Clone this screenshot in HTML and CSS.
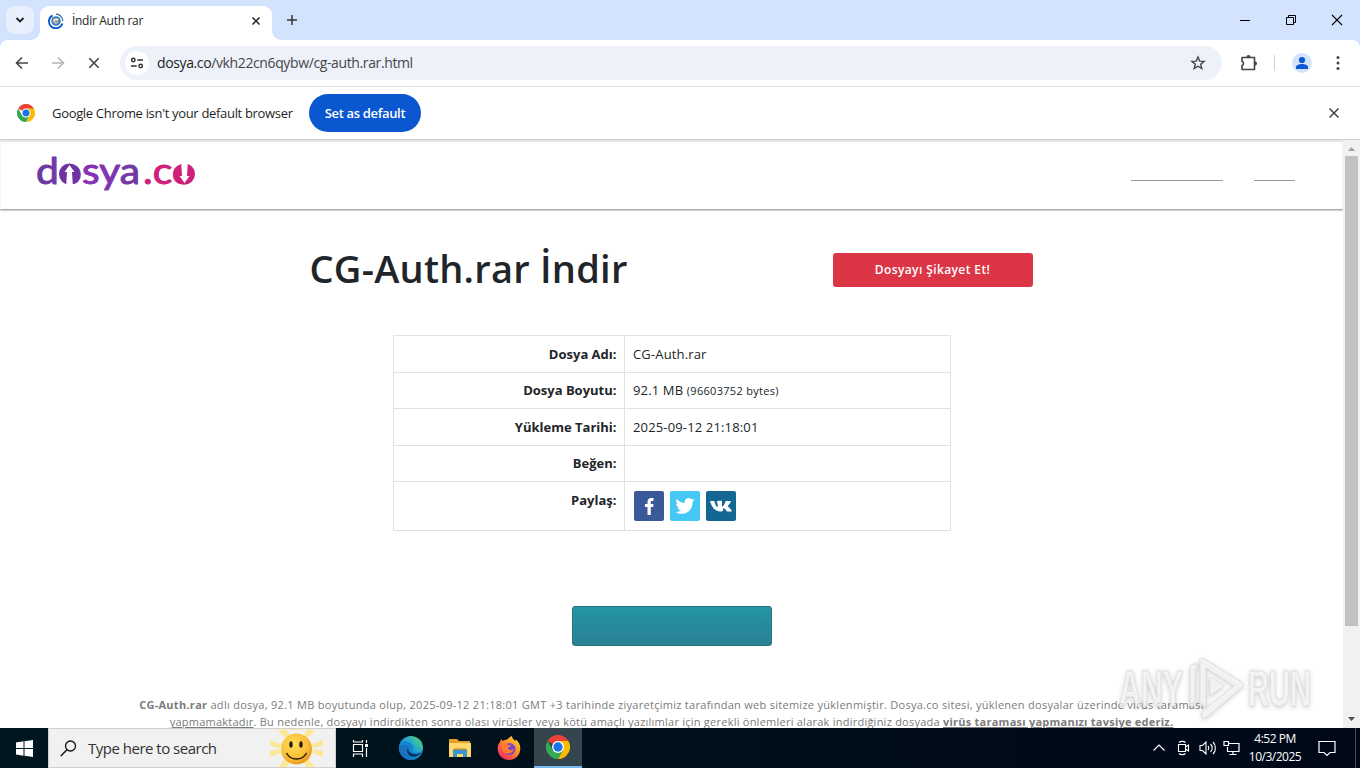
FILE: index.html
```html
<!DOCTYPE html>
<html lang="tr">
<head>
    <meta charset="UTF-8">
    <meta name="viewport" content="width=device-width, initial-scale=1.0">
    <link rel="stylesheet" href="styles.css">
    <title>İndir Auth rar</title>
</head>
<body>
    <svg class="defs" width="0" height="0">
        <defs>
            <linearGradient id="purple" x1="0" y1="0" x2="1" y2="0">
                <stop offset="0" stop-color="#673a9e"/><stop offset=".5" stop-color="#8a2fb8"/><stop offset="1" stop-color="#6d3a9f"/>
            </linearGradient>
            <linearGradient id="edge" x1="0" y1="1" x2="1" y2="0">
                <stop offset="0" stop-color="#0c59a4"/><stop offset=".5" stop-color="#1b9de2"/><stop offset="1" stop-color="#5fdc63"/>
            </linearGradient>
            <linearGradient id="fire" x1="1" y1="0" x2=".2" y2="1">
                <stop offset="0" stop-color="#ffe23e"/><stop offset=".45" stop-color="#ff9420"/><stop offset="1" stop-color="#f02465"/>
            </linearGradient>
            <radialGradient id="sun" cx=".4" cy=".35" r=".7">
                <stop offset="0" stop-color="#ffdf58"/><stop offset=".65" stop-color="#fbbd35"/><stop offset="1" stop-color="#e5901c"/>
            </radialGradient>
            <symbol id="chrome" viewBox="0 0 48 48">
                <path fill="#ea4335" d="M24 24 3.2 12A24 24 0 0 1 44.8 12z"/>
                <path fill="#34a853" d="M3.2 12 13.6 30 24 36 34.4 30 24 48A24 24 0 0 1 3.2 12z"/>
                <path fill="#fbbc04" d="M24 12h20.8A24 24 0 0 1 24 48L34.4 30z"/>
                <circle cx="24" cy="24" r="12" fill="#fff"/><circle cx="24" cy="24" r="9.3" fill="#1a73e8"/>
            </symbol>
        </defs>
    </svg>

    <div class="tabstrip">
        <div class="tab-search"><svg width="10" height="8" viewBox="0 0 10 8"><path d="M1.5 2 5 5.5 8.5 2" fill="none" stroke="#1f1f1f" stroke-width="1.8"/></svg></div>
        <div class="tab">
            <svg width="16" height="16" viewBox="0 0 16 16">
                <path d="M4.500 2.300A6.900 6.900 0 1 0 14.400 10.500" fill="none" stroke="#0b57d0" stroke-width="1.900"/>
                <path d="M8 1.200A6.800 6.800 0 0 1 14.800 8" fill="none" stroke="#25699f" stroke-width="1.200"/>
                <circle cx="8" cy="8" r="4.800" fill="#4781af"/>
                <path d="M5.500 6 9 5.200l2 1.500-1.800 1.200 1 2-2.600.8-2.500-2.300z" fill="#eee5df"/>
                <path d="m6.400 7.500 2.800.6-1 1.800z" fill="#8f4c38"/>
            </svg>
            <span class="tab-title">İndir Auth rar</span>
            <svg class="tab-close" width="10" height="10" viewBox="0 0 10 10"><path d="m1.5 1.5 7 7m0-7-7 7" stroke="#1f1f1f" stroke-width="1.5"/></svg>
        </div>
        <svg class="new-tab" width="12" height="12" viewBox="0 0 12 12"><path d="M6 1v10M1 6h10" stroke="#333" stroke-width="1.5"/></svg>
        <div class="window-buttons">
            <svg width="12" height="12" viewBox="0 0 12 12"><path d="M1 6.5h10" stroke="#000"/></svg>
            <svg width="12" height="12" viewBox="0 0 12 12"><path d="M1.5 3.5h7v7h-7zM3.500 3.500v-2h7v7h-2" fill="none" stroke="#000"/></svg>
            <svg width="12" height="12" viewBox="0 0 12 12"><path d="m1 1 10 10M11 1 1 11" stroke="#000" stroke-width="1.1"/></svg>
        </div>
    </div>

    <div class="toolbar">
        <svg class="nav-icon" width="14" height="14" viewBox="0 0 14 14"><path d="M13 7H2m5-5.500L1.500 7 7 12.500" fill="none" stroke="#444" stroke-width="1.6"/></svg>
        <svg class="nav-icon" width="14" height="14" viewBox="0 0 14 14"><path d="M1 7h11M7 1.500 12.500 7 7 12.500" fill="none" stroke="#b5b5b5" stroke-width="1.6"/></svg>
        <svg class="nav-icon" width="14" height="14" viewBox="0 0 14 14"><path d="m2.300 2.300 9.400 9.400m0-9.400-9.400 9.400" stroke="#444" stroke-width="1.6"/></svg>
        <div class="omnibox">
            <div class="site-info">
                <svg width="14" height="12" viewBox="0 0 14 12" fill="none" stroke="#333" stroke-width="1.5"><circle cx="3.300" cy="3" r="1.700"/><path d="M7.300 3H13M1 9h5.700"/><circle cx="10.700" cy="9" r="1.700"/></svg>
            </div>
            <span class="url"><b>dosya.co</b>/vkh22cn6qybw/cg-auth.rar.html</span>
            <svg class="star" width="16" height="16" viewBox="0 0 16 16"><path d="m8 2 1.700 4.100 4.400.3-3.400 2.800 1.100 4.300L8 11.200l-3.800 2.300 1.100-4.300L1.900 6.400l4.400-.3z" fill="none" stroke="#444" stroke-width="1.4"/></svg>
        </div>
        <svg class="puzzle" width="18" height="18" viewBox="0 0 18 18"><path d="M2 3.500h12.500v12H2v-4a2.200 2.200 0 0 0 0-4.200z" fill="none" stroke="#444" stroke-width="1.600" stroke-linejoin="round"/><path d="M6.500 3a2 2 0 0 1 4 0zM15 7.500a2 2 0 0 1 0 4z" fill="#444"/></svg>
        <span class="divider"></span>
        <svg class="profile" width="20" height="20" viewBox="0 0 20 20"><circle cx="10" cy="10" r="10" fill="#d3e3fd"/><circle cx="10" cy="7" r="3.100" fill="#0b57d0"/><path d="M4 16v-2c0-2 3.300-3 6-3s6 1 6 3v2z" fill="#0b57d0"/></svg>
        <svg width="4" height="16" viewBox="0 0 4 16" fill="#444"><circle cx="2" cy="2.500" r="1.500"/><circle cx="2" cy="8" r="1.500"/><circle cx="2" cy="13.500" r="1.500"/></svg>
    </div>

    <div class="infobar">
        <svg width="18" height="18"><use href="#chrome"/></svg>
        <span class="infobar-text">Google Chrome isn't your default browser</span>
        <button class="default-button">Set as default</button>
        <svg class="infobar-close" width="12" height="12" viewBox="0 0 12 12"><path d="m1.500 1.500 9 9m0-9-9 9" stroke="#444" stroke-width="1.500"/></svg>
    </div>

    <div class="viewport">
        <div class="page">
            <header class="header">
                <svg class="logo" width="160" height="48" viewBox="0 0 160 48">
                    <text class="logo-text" x="-1" y="31" textLength="104" lengthAdjust="spacingAndGlyphs" fill="url(#purple)" stroke="url(#purple)">dosya</text>
                    <text class="logo-text" x="106" y="31" textLength="52" lengthAdjust="spacingAndGlyphs" fill="#cf1f7d" stroke="#cf1f7d">.co</text>
                    <ellipse cx="32.500" cy="21" rx="10.500" ry="10.500" fill="#7131a3"/>
                    <path d="m32.500 12 5 7H35l.8 13h-6.600l.8-13h-2.500z" fill="#fff"/>
                    <ellipse cx="147.500" cy="21" rx="10.500" ry="10.500" fill="#cf1f7d"/>
                    <path d="m147.500 30-5-7h2.500l-.8-13h6.600l-.8 13h2.500z" fill="#fff"/>
                </svg>
                <nav class="nav">
                    <a class="nav-link nav-link-wide"></a>
                    <a class="nav-link"></a>
                </nav>
            </header>

            <div class="title-row">
                <h1>CG-Auth.rar İndir</h1>
                <button class="report-button">Dosyayı Şikayet Et!</button>
            </div>

            <table class="file-info">
                <tr><th>Dosya Adı:</th><td>CG-Auth.rar</td></tr>
                <tr><th>Dosya Boyutu:</th><td>92.1 MB <small>(96603752 bytes)</small></td></tr>
                <tr><th>Yükleme Tarihi:</th><td>2025-09-12 21:18:01</td></tr>
                <tr><th>Beğen:</th><td></td></tr>
                <tr class="share-row">
                    <th>Paylaş:</th>
                    <td>
                        <div class="share">
                            <svg width="30" height="30" viewBox="0 0 30 30"><rect width="30" height="30" rx="2" fill="#3b5998"/><path d="M13.500 24v-8H11v-3h2.500v-2C13.500 8.300 15 7 17.200 7h2.300v3H18c-.9 0-1.200.4-1.200 1.200V13h2.700l-.4 3h-2.300v8z" fill="#fff"/></svg>
                            <svg width="30" height="30" viewBox="0 0 30 30"><rect width="30" height="30" rx="2" fill="#45c8f5"/><path d="M24.500 9c-.7.300-1.400.5-2.200.6.800-.5 1.400-1.200 1.700-2.100-.8.400-1.600.8-2.500.9a3.900 3.900 0 0 0-6.700 3.600c-3.300-.2-6.200-1.700-8.100-4.100-1 1.800-.5 4 1.200 5.200-.6 0-1.200-.2-1.800-.5 0 1.900 1.300 3.500 3.200 3.900-.6.200-1.200.2-1.800.1.500 1.500 1.900 2.700 3.700 2.700A8 8 0 0 1 5.500 21c7.800 4.900 17.300-.4 17-10 .8-.6 1.500-1.200 2-2z" fill="#fff"/></svg>
                            <svg width="30" height="30" viewBox="0 0 30 30"><rect width="30" height="30" rx="2" fill="#146693"/><path d="M4 10h4.300c.7 3 1.700 5 3 6.200.8-.8.700-4.200-.8-5.200.9-1.200 3-1.500 5.500-1v5.800c1.700-.8 3-3.500 3.700-5.800H25c-.6 2-2 3.800-3.500 5.300 1.800 1.200 3.600 3 4.500 5.200h-5c-.9-1.800-2.700-3.200-4-3.500.7 2.200-.5 3.500-2.500 3.500C9 20.500 5.500 16 4 10z" fill="#fff"/></svg>
                        </div>
                    </td>
                </tr>
            </table>

            <button class="download-button"></button>

            <p class="notice">
                <span class="notice-first"><b>CG-Auth.rar</b> adlı dosya, 92.1 MB boyutunda olup, 2025-09-12 21:18:01 GMT +3 tarihinde ziyaretçimiz tarafından web sitemize yüklenmiştir. Dosya.co sitesi, yüklenen dosyalar üzerinde virüs taraması</span>
                <span class="notice-second"><u>yapmamaktadır</u>. Bu nedenle, dosyayı indirdikten sonra olası virüsler veya kötü amaçlı yazılımlar için gerekli önlemleri alarak indirdiğiniz dosyada <b><u>virüs taraması yapmanızı tavsiye ederiz.</u></b></span>
            </p>
        </div>
        <div class="scrollbar">
            <svg width="9" height="5" viewBox="0 0 9 5"><path d="M1 5h7L4.500 1z" fill="#a3a3a3"/></svg>
            <div class="scroll-thumb"></div>
            <svg width="9" height="5" viewBox="0 0 9 5"><path d="M1 0h7L4.500 4z" fill="#505050"/></svg>
        </div>
        <svg class="watermark" width="200" height="70" viewBox="0 0 200 70">
            <g class="watermark-shape">
                <text x="3" y="51" textLength="64" lengthAdjust="spacingAndGlyphs">ANY</text>
                <text x="132" y="51" textLength="63" lengthAdjust="spacingAndGlyphs">RUN</text>
                <path d="M84 51V6q0-4 4-2l37 23q4 3 0 6L91 62q-3 2-5 0v-5l32-26L90 13v38zM74 14q0-5 7-5v5l-2 1v36h-5zM94 22l14 9-14 10z" fill-rule="evenodd"/>
            </g>
        </svg>
    </div>

    <div class="taskbar">
        <div class="start"><svg width="17" height="17" viewBox="0 0 17 17"><path d="M0 2.400 7.500 1.300V8H0zM8.500 1.200 17 0v8H8.500zM0 9h7.500v6.700L0 14.600zM8.500 9H17v8l-8.500-1.200z" fill="#fff"/></svg></div>
        <div class="search">
            <svg width="17" height="17" viewBox="0 0 17 17"><circle cx="10.500" cy="6" r="5" fill="none" stroke="#111" stroke-width="1.300"/><path d="M7 9.700.8 16" stroke="#111" stroke-width="1.400"/></svg>
            <span class="search-text">Type here to search</span>
            <svg class="sun" width="60" height="39" viewBox="0 0 60 39">
                <g fill="#fbe896"><path d="m24 1-2-5h16l-2 5zM24 38l-2 5h16l-2-5zM14 15 3 11v6l10 2zM14 24 3 28v-6l10-2zM45 15l11-4v6l-10 2zM45 24l11 4v-6l-10-2zM18 9l-7-8 8-1 4 6zM41 9l7-8-8-1-3 6zM18 30l-7 8 8 1 4-6zM41 30l7 8-8 1-3-6z"/></g>
                <circle cx="29.500" cy="20" r="15.500" fill="url(#sun)"/>
                <ellipse cx="24" cy="15.500" rx="1.700" ry="3.200" fill="#2a1b0a"/><ellipse cx="34" cy="15.500" rx="1.700" ry="3.200" fill="#2a1b0a"/>
                <path d="M19.500 24c4 8 16 8 20 0" fill="none" stroke="#2a1b0a" stroke-width="1.500"/>
            </svg>
        </div>
        <div class="task task-view"><svg width="18" height="17" viewBox="0 0 18 17" fill="none" stroke="#fff" stroke-width="1.200"><path d="M2.500 4.500h9v7h-9zM2.500 0v2h9V0M2.500 17v-3h9v3M15.500 0v3M15.500 8v9"/><path d="M14 4h3v3h-3z" fill="#fff" stroke="none"/></svg></div>
        <div class="task">
            <svg width="24" height="24" viewBox="0 0 24 24"><circle cx="12" cy="12" r="12" fill="url(#edge)"/><path d="M.1 11C1 5 9 4 13 8c2 2 2 4 .6 5.500-.8 1 .4 2.700 3.400 3 2 .2 4-.4 6-1.500-2 6-7 9-12 9C5 23.500 0 18 .1 11z" fill="#1386d2"/><path d="M8 12.500C6.500 18 11 22.500 16 22.500 8 26-1 19 .1 12 2 8 7 8.500 10 9.700 8.800 10.500 8.300 11.500 8 12.500z" fill="#1b72bd"/><path d="M9.500 11.200C8 16 14 20.500 22.500 16.500 19.500 21.500 11 22.500 8.600 17 7.700 14.500 8.200 12.500 9.500 11.200z" fill="#07335f"/></svg>
        </div>
        <div class="task">
            <svg width="22" height="20" viewBox="0 0 22 20"><path d="M0 1h8l2 2h11v16H0z" fill="#e3a02d"/><path d="M0 5h22v14H0z" fill="#ffd86b"/><path d="M4 19v-7.500h14V19h-4v-3H8v3z" fill="#3b94d4"/><path d="M5 10.500h12v1.500H5z" fill="#b98e35"/></svg>
        </div>
        <div class="task">
            <svg width="24" height="24" viewBox="0 0 24 24"><path d="M3 6c.2-1 .6-2 1.500-3 .2 1 .6 1.500 1.200 2 .8-.8 2-1.200 3.300-1.300C11 3.500 12.500 1 15 0c-.2 2.500 2 3.500 3.500 5l.5-1.500c3 2.500 4.500 6 4.300 9.500C23 19.500 18 24 12 24S.8 19.500.6 13C.5 10 1.500 7.500 3 6z" fill="url(#fire)"/><circle cx="12.500" cy="13" r="6" fill="#7a45d1"/><path d="M6 8c2-1 4-.5 5 1h3c0 1.500-2 2-3 2.500 0 3 4 3.500 6 1-.5 5-8 7.500-11.500 2C4.500 12 4.800 9.500 6 8z" fill="#ff7a2d"/></svg>
        </div>
        <div class="task task-active"><svg width="24" height="24"><use href="#chrome"/></svg></div>
        <div class="tray">
            <div class="tray-icon"><svg width="14" height="14" viewBox="0 0 14 14"><path d="m1.500 9.500 5.500-5.500 5.500 5.500" fill="none" stroke="#fff" stroke-width="1.200"/></svg></div>
            <div class="tray-icon"><svg width="14" height="16" viewBox="0 0 14 16" fill="none" stroke="#fff" stroke-width="1.100"><path d="M2.500 4.500h7v7h-7zM9.500 7l3-2v6l-3-2M3 2.500c1.500-1.500 5-1.500 6.500 0M3 13.500c1.500 1.500 5 1.500 6.500 0"/></svg></div>
            <div class="tray-icon"><svg width="17" height="16" viewBox="0 0 17 16" fill="none" stroke="#fff" stroke-width="1.100"><path d="M1 5.500h2.500L7 2v12l-3.500-3.500H1zM9 6c1 1 1 3 0 4M11.500 4c2.200 2.200 2.200 5.800 0 8M14 2c3.200 3.200 3.200 8.800 0 12"/></svg></div>
            <div class="tray-icon"><svg width="17" height="16" viewBox="0 0 17 16" fill="none" stroke="#fff" stroke-width="1.200"><path d="M6 3.500h10v8H4.500V7M10 11.500V14M6.500 14.500h7M1 1.500h4.500v4H1z"/></svg></div>
            <div class="clock"><span>4:52 PM</span><span class="date">10/3/2025</span></div>
            <svg class="notify" width="18" height="17" viewBox="0 0 18 17"><path d="M1 1.500h16v11h-5L9 15.500l-3-3H1z" fill="none" stroke="#fff" stroke-width="1.200"/></svg>
            <span class="show-desktop"></span>
        </div>
    </div>
</body>
</html>
```
FILE: styles.css
```css
* {
    box-sizing: border-box;
}

body {
    margin: 0;
    width: 1360px;
    height: 768px;
    overflow: hidden;
    display: flex;
    flex-direction: column;
    font-family: 'Open Sans', 'Noto Sans', sans-serif;
    background-color: #d3e3fd;
}

svg {
    display: block;
    flex-shrink: 0;
}

span, h1, th, td {
    white-space: nowrap;
}

button {
    font-family: inherit;
    padding: 0;
    border: none;
}

.defs {
    position: absolute;
}

/* browser */
.tabstrip {
    height: 40px;
    flex-shrink: 0;
    display: flex;
    align-items: center;
    padding-left: 6px;
}

.tab-search {
    width: 28px;
    height: 28px;
    border-radius: 9px;
    background-color: #e9f0fd;
    display: flex;
    align-items: center;
    justify-content: center;
}

.tab {
    position: relative;
    width: 232px;
    height: 34px;
    margin: 6px 0 0 6px;
    padding: 0 11px 5px 8px;
    border-radius: 9px 9px 0 0;
    background-color: white;
    display: flex;
    align-items: center;
    gap: 8px;
}

.tab::before, .tab::after {
    content: '';
    position: absolute;
    bottom: 0;
    width: 9px;
    height: 9px;
}

.tab::before {
    left: -9px;
    background: radial-gradient(circle at 0 0, transparent 8.5px, white 9px);
}

.tab::after {
    right: -9px;
    background: radial-gradient(circle at 100% 0, transparent 8.5px, white 9px);
}

.tab-title {
    font-size: 12px;
    letter-spacing: -0.3px;
    color: #1f1f1f;
}

.tab-close {
    margin-left: auto;
}

.new-tab {
    margin-left: 14px;
}

.window-buttons {
    margin-left: auto;
    padding-right: 17px;
    display: flex;
    gap: 34px;
}

.toolbar {
    height: 47px;
    flex-shrink: 0;
    display: flex;
    align-items: center;
    padding: 0 20px 0 15px;
    border-bottom: 1px solid #dfe1e5;
    border-radius: 8px 8px 0 0;
    background-color: white;
}

.nav-icon {
    margin-right: 22px;
}

.omnibox {
    width: 1102px;
    height: 34px;
    margin-left: -3px;
    border-radius: 17px;
    background-color: #edf1fa;
    display: flex;
    align-items: center;
    padding: 0 16px 0 5px;
}

.site-info {
    width: 24px;
    height: 24px;
    border-radius: 50%;
    background-color: white;
    display: flex;
    align-items: center;
    justify-content: center;
}

.url {
    margin-left: 8px;
    padding-bottom: 1px;
    font-size: 14px;
    letter-spacing: -0.38px;
    color: #474747;
}

.url b {
    font-weight: 400;
    color: #1f1f1f;
}

.star {
    margin-left: auto;
}

.puzzle {
    margin-left: 18px;
}

.divider {
    width: 1px;
    height: 16px;
    margin: 0 17px 0 16px;
    background-color: #c9d3e6;
}

.profile {
    margin-right: 24px;
}

.infobar {
    height: 53px;
    flex-shrink: 0;
    display: flex;
    align-items: center;
    padding: 0 20px 0 17px;
    border-bottom: 1px solid #d0d0d0;
    background-color: white;
}

.infobar-text {
    width: 241px;
    margin: 0 16px 0 17px;
    font-size: 13px;
    letter-spacing: -0.32px;
    color: #1f1f1f;
}

.default-button {
    width: 112px;
    height: 38px;
    border-radius: 19px;
    background-color: #0b57d0;
    color: white;
    font-size: 13px;
    font-weight: 600;
    letter-spacing: -0.35px;
}

.infobar-close {
    margin-left: auto;
}

/* web page */
.viewport {
    position: relative;
    height: 588px;
    flex-shrink: 0;
    display: flex;
    overflow: hidden;
    background-color: white;
}

.page {
    width: 1343px;
    display: flex;
    flex-direction: column;
    align-items: center;
    color: #212529;
}

.header {
    width: 100%;
    height: 69px;
    flex-shrink: 0;
    display: flex;
    justify-content: space-between;
    padding: 13px 48px 0 37px;
    box-shadow: 0 1px 2px rgba(0, 0, 0, 0.5), inset 0 2px 2px rgba(0, 0, 0, 0.12);
}

.logo {
    overflow: visible;
}

.logo-text {
    font-family: Lato, sans-serif;
    font-size: 37px;
    font-weight: 400;
    stroke-width: 1;
    stroke-linejoin: round;
}

.nav {
    display: flex;
    gap: 31px;
}

.nav-link {
    width: 41px;
    height: 28px;
    border-bottom: 1px solid #999;
}

.nav-link-wide {
    width: 92px;
}

.title-row {
    width: 724px;
    margin-top: 35px;
    padding-right: 1px;
    display: flex;
    justify-content: space-between;
    align-items: flex-start;
}

h1 {
    margin: 0;
    font-size: 38px;
    line-height: 48px;
    font-weight: 600;
    letter-spacing: 0.25px;
}

.report-button {
    width: 200px;
    height: 34px;
    margin-top: 9px;
    padding-bottom: 2px;
    border-radius: 3px;
    background-color: #dc3545;
    color: white;
    font-size: 12px;
    font-weight: 600;
    letter-spacing: 0.4px;
}

.file-info {
    width: 558px;
    margin-top: 43px;
    border-collapse: collapse;
    table-layout: fixed;
    font-size: 13px;
}

.file-info th, .file-info td {
    height: 36.5px;
    padding: 0 7px 0 8.5px;
    border: 1px solid #dee2e6;
    line-height: 20px;
    letter-spacing: 0.15px;
}

.file-info th {
    width: 231px;
    text-align: right;
    font-weight: 700;
    letter-spacing: 0;
}

.file-info small {
    font-size: 11px;
    letter-spacing: 0.3px;
}

.file-info .share-row th, .file-info .share-row td {
    height: 49px;
    padding-top: 8px;
    vertical-align: top;
}

.share {
    display: flex;
    gap: 6px;
    padding: 1px 0 1px 1px;
}

.download-button {
    width: 200px;
    height: 40px;
    flex-shrink: 0;
    margin-top: 75px;
    border: 1px solid #27747f;
    border-radius: 3px;
    background: linear-gradient(#2396a4, #2a8093);
}

.notice {
    margin: 50px 0 0;
    font-size: 11px;
    line-height: 17px;
    color: #7b7b7b;
    letter-spacing: 0.28px;
    display: flex;
    flex-direction: column;
    align-items: center;
}

.notice-second {
    letter-spacing: 0.24px;
}

.scrollbar {
    width: 17px;
    background-color: #f1f1f1;
    display: flex;
    flex-direction: column;
    align-items: center;
    padding: 6px 0;
}

.scroll-thumb {
    width: 13px;
    height: 470px;
    margin: 5px 0 auto;
    background-color: #c1c1c1;
}

.watermark {
    position: absolute;
    left: 1116px;
    top: 515px;
}

.watermark-shape {
    fill: rgba(255, 255, 255, 0.65);
    stroke: #dedede;
    stroke-width: 1;
    font-family: 'Liberation Sans', sans-serif;
    font-size: 50px;
    font-weight: 700;
    filter: drop-shadow(0 1px 2px rgba(0, 0, 0, 0.25));
}

/* taskbar */
.taskbar {
    height: 40px;
    flex-shrink: 0;
    display: flex;
    background: linear-gradient(90deg, #00171f, #000b19 75%, #000818);
}

.start {
    width: 48px;
    display: flex;
    align-items: center;
    justify-content: center;
}

.search {
    width: 288px;
    border: 1px solid #d0d0d0;
    background-color: #f1f1f1;
    display: flex;
    align-items: center;
    padding: 0 8px 0 11px;
    overflow: hidden;
}

.search-text {
    margin-left: 11px;
    font-size: 15px;
    letter-spacing: -0.5px;
    color: #333;
}

.sun {
    margin-left: auto;
}

.task {
    width: 48px;
    margin-right: 1px;
    display: flex;
    align-items: center;
    justify-content: center;
}

.task-view {
    margin-right: 3px;
}

.task-active {
    background-color: #35454e;
    border-bottom: 2px solid #76b9ed;
}

.tray {
    margin-left: auto;
    display: flex;
    align-items: center;
}

.tray-icon {
    width: 24px;
    display: flex;
    justify-content: center;
}

.clock {
    width: 54px;
    margin-left: 5px;
    display: flex;
    flex-direction: column;
    align-items: center;
    color: white;
    font-size: 12px;
    line-height: 18px;
    letter-spacing: -0.5px;
}

.notify {
    margin-left: 16px;
}

.show-desktop {
    width: 1px;
    height: 40px;
    margin: 0 4px 0 19px;
    background-color: #454c57;
}
```
